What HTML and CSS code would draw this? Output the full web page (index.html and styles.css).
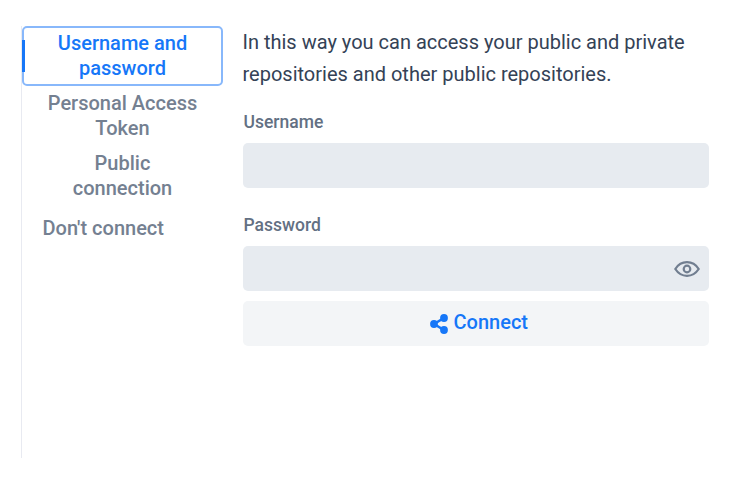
FILE: index.html
```html
<!DOCTYPE html>
<html lang="en">
<head>
<meta charset="utf-8">
<title>Connect</title>
<link rel="stylesheet" href="styles.css">
</head>
<body>
<main class="layout">
  <nav class="tabs">
    <button class="tab active">Username and password</button>
    <button class="tab">Personal Access Token</button>
    <button class="tab">Public<br>connection</button>
    <button class="tab single">Don't connect</button>
  </nav>
  <form class="panel">
    <p class="intro">In this way you can access your public and private repositories and other public repositories.</p>
    <label class="label" for="user">Username</label>
    <div class="field"><input id="user" type="text"></div>
    <label class="label second" for="pass">Password</label>
    <div class="field"><input id="pass" type="password">
      <svg class="eye" viewBox="0 0 26 16"><path d="M1.300 8C4 3.800 8 1.200 13 1.200S22 3.800 24.700 8C22 12.200 18 14.800 13 14.800S4 12.200 1.300 8Z"/><circle cx="13" cy="8" r="3.300"/></svg>
    </div>
    <button type="button" class="connect">
      <svg class="share" viewBox="0 0 18 20"><path d="M14 4 4 10l10 6"/><circle cx="14" cy="4" r="3.900"/><circle cx="4" cy="10" r="3.900"/><circle cx="14" cy="16" r="3.900"/></svg>
      <span>Connect</span>
    </button>
  </form>
</main>
</body>
</html>
```
FILE: styles.css
```css
* { box-sizing: border-box; }
body { margin: 0; background: #fff; font-family: Roboto, sans-serif; color: #344256; }
button, input { font: inherit; border: 0; }
.layout { display: flex; padding: 26px 25px 0 21px; }
.tabs { width: 202px; height: 432px; border-left: 1px solid #e8eaf1; display: flex; flex-direction: column; align-items: stretch; }
.tab { position: relative; height: 60px; padding: 5px 20px; background: none; color: #748091; font-size: 20px; line-height: 25px; font-weight: 500; text-align: center; }
.tab.active { color: #1677f8; border: 2px solid #88b8fb; border-radius: 5px; padding: 3px 18px; }
.tab.active::before { content: ""; position: absolute; left: -2px; top: 12px; width: 3px; height: 32px; background: #1677f8; }
.tab.single { height: 45px; text-align: left; padding-left: 20.500px; }
.panel { width: 466px; margin-left: 20px; }
.intro { margin: 0 0 20px -0.500px; font-size: 20px; line-height: 32px; }
.label { display: block; height: 33px; padding-left: 0.500px; font-size: 17.500px; line-height: 24px; font-weight: 500; color: #637083; }
.field { position: relative; height: 45px; }
.field input { display: block; width: 100%; height: 45px; background: #e7ebf0; border-radius: 5px; }
.second { margin-top: 25px; }
.eye { position: absolute; right: 9px; top: 14.500px; width: 26px; height: 16px; fill: none; stroke: #717e90; stroke-width: 2.200; }
.connect { display: flex; width: 100%; height: 45px; margin-top: 10px; padding: 0 0 3px 6px; gap: 5.500px; align-items: center; justify-content: center; border-radius: 5px; background: #f3f5f7; color: #1677f8; font-size: 20px; font-weight: 500; }
.share { width: 18px; height: 20px; margin-top: 3px; fill: currentColor; stroke: none; }
.share path { fill: none; stroke: currentColor; stroke-width: 2.600; }
```
